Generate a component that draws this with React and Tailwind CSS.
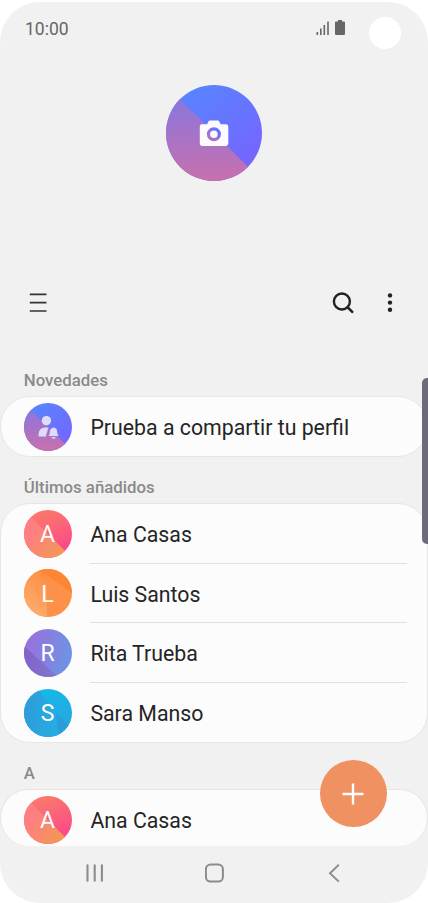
import React from "react";

const contacts = [
  { name: "Ana Casas", letter: "A" },
  { name: "Luis Santos", letter: "L" },
  { name: "Rita Trueba", letter: "R" },
  { name: "Sara Manso", letter: "S" },
];

// shared gradients for all the round avatars
function Gradients() {
  return (
    <svg className="absolute w-0 h-0" aria-hidden="true">
      <defs>
        <clipPath id="round">
          <circle cx="24" cy="24" r="24" />
        </clipPath>
        <linearGradient id="profileTop" x1="0.1" y1="0" x2="0.9" y2="1">
          <stop offset="0" stopColor="#5488ff" />
          <stop offset="1" stopColor="#7a60ff" />
        </linearGradient>
        <linearGradient id="profileBottom" x1="0" y1="0" x2="0" y2="1">
          <stop offset="0" stopColor="#8077e6" />
          <stop offset="1" stopColor="#c870ac" />
        </linearGradient>
        <linearGradient id="redTop" x1="0.4" y1="0" x2="0.8" y2="1">
          <stop offset="0" stopColor="#fc776b" />
          <stop offset="0.3" stopColor="#fb6a74" />
          <stop offset="0.8" stopColor="#fc4b88" />
        </linearGradient>
        <linearGradient id="redBottom" x1="0" y1="0.4" x2="0.8" y2="1">
          <stop offset="0.2" stopColor="#fd7f80" />
          <stop offset="1" stopColor="#f29a50" />
        </linearGradient>
        <linearGradient id="orangeLeft" x1="0.6" y1="0" x2="0.2" y2="1">
          <stop offset="0" stopColor="#fd8e45" />
          <stop offset="1" stopColor="#ffb070" />
        </linearGradient>
        <linearGradient id="violetTop" x1="0" y1="0" x2="1" y2="0.2">
          <stop offset="0.1" stopColor="#9a70dc" />
          <stop offset="1" stopColor="#6e92e4" />
        </linearGradient>
        <linearGradient id="violetBottom" x1="0" y1="0" x2="1" y2="0">
          <stop offset="0" stopColor="#8262c6" />
          <stop offset="1" stopColor="#7f78d2" />
        </linearGradient>
        <linearGradient id="blueRight" x1="0.3" y1="0" x2="0.8" y2="1">
          <stop offset="0" stopColor="#16b9ea" />
          <stop offset="1" stopColor="#28a5dd" />
        </linearGradient>
        <linearGradient id="blueLeft" x1="0" y1="0.5" x2="1" y2="0.5">
          <stop offset="0" stopColor="#309bd8" />
          <stop offset="1" stopColor="#22afe3" />
        </linearGradient>
      </defs>
    </svg>
  );
}

const shapes = {
  profile: (
    <>
      <rect width="48" height="48" fill="url(#profileTop)" />
      <path d="M0 0L48 48H0Z" fill="url(#profileBottom)" />
    </>
  ),
  A: (
    <>
      <rect width="48" height="48" fill="url(#redTop)" />
      <path d="M0 0L48 48H0Z" fill="url(#redBottom)" />
    </>
  ),
  L: (
    <>
      <rect width="48" height="48" fill="#fd9149" />
      <path d="M0 0H23V48H0Z" fill="url(#orangeLeft)" />
      <path d="M14 0H48V24Z" fill="#fe8534" />
    </>
  ),
  R: (
    <>
      <rect width="48" height="48" fill="url(#violetTop)" />
      <path d="M0 17L34 48H0Z" fill="url(#violetBottom)" />
    </>
  ),
  S: (
    <>
      <rect width="48" height="48" fill="url(#blueRight)" />
      <path d="M13 0L34 24V48H0V0Z" fill="url(#blueLeft)" />
      <path d="M32 24L46 38L34 48Z" fill="#2d99d9" opacity="0.7" />
    </>
  ),
};

function Avatar({ kind, children }) {
  return (
    <div className="grid w-12 h-12 shrink-0 place-items-center">
      <svg viewBox="0 0 48 48" className="col-start-1 row-start-1 w-12 h-12">
        <g clipPath="url(#round)">{shapes[kind]}</g>
      </svg>
      <div className="col-start-1 row-start-1 text-[23px] leading-none text-white pt-0.5">
        {children}
      </div>
    </div>
  );
}

function ContactRow({ contact, last }) {
  return (
    <li className="flex h-[59.7px] pl-[22.5px] pr-[20.5px]">
      <div className="pt-[5.6px]">
        <Avatar kind={contact.letter}>{contact.letter}</Avatar>
      </div>
      <div
        className={`ml-[18.9px] flex-1 pt-4 text-[21.3px] leading-[30px] ${
          last ? "" : "border-b border-[#e0e0e0]"
        }`}
      >
        {contact.name}
      </div>
    </li>
  );
}

function SectionTitle({ children }) {
  return (
    <h2 className="pl-[23.8px] pt-[18.4px] text-[16.8px] leading-6 font-medium text-[#8a8a8a]">
      {children}
    </h2>
  );
}

function App() {
  return (
    <div className="h-[903px] w-[428px] overflow-hidden bg-white pt-0.5 font-['Roboto',sans-serif] text-[#252525]">
      <Gradients />
      <div className="relative flex h-[901px] flex-col overflow-hidden rounded-[40px] bg-[#f1f1f1]">
        {/* status bar */}
        <header className="flex h-[83px] shrink-0 items-start pl-[25px] pr-[27.3px] text-[#666]">
          <span className="mt-[15px] text-[17.5px] leading-6">10:00</span>
          <svg viewBox="0 0 14 14" className="ml-auto mt-[19px] h-3.5 w-3.5" fill="currentColor">
            <rect x="0.5" y="11" width="1.6" height="3" />
            <rect x="4" y="7.5" width="1.6" height="6.5" />
            <rect x="7.5" y="4" width="1.6" height="10" />
            <rect x="11.2" y="0.6" width="1.6" height="13.4" />
          </svg>
          <svg viewBox="0 0 10 15" className="ml-[5px] mt-[18px] h-[15px] w-2.5" fill="currentColor">
            <path d="M3 0H7V1.5H9Q10 1.5 10 2.5V14Q10 15 9 15H1Q0 15 0 14V2.5Q0 1.5 1 1.5H3Z" />
          </svg>
          <span className="ml-6 mt-[15px] h-8 w-8 rounded-full bg-white" />
        </header>

        <div className="grid h-24 w-24 shrink-0 place-items-center self-center">
          <svg viewBox="0 0 48 48" className="col-start-1 row-start-1 h-24 w-24">
            <g clipPath="url(#round)">{shapes.profile}</g>
          </svg>
          <svg viewBox="0 0 30 26" className="col-start-1 row-start-1 h-[26px] w-[30px]">
            <path
              fill="#fcfcff"
              fillRule="evenodd"
              d="M10.8 0.4H18.8Q19.6 0.4 20 1.1L21.6 4.2H26.9Q29.3 4.2 29.3 6.6V23.6Q29.3 26 26.9 26H3.1Q0.8 26 0.8 23.6V6.6Q0.8 4.2 3.1 4.2H8.1L9.7 1.1Q10.1 0.4 10.8 0.4ZM14.9 7.3A7 7 0 1 0 14.9 21.3A7 7 0 1 0 14.9 7.3ZM14.9 10.5A3.8 3.8 0 1 1 14.9 18.1A3.8 3.8 0 1 1 14.9 10.5Z"
            />
          </svg>
        </div>

        {/* toolbar */}
        <div className="mt-[97.6px] flex h-12 shrink-0 items-center pl-[29px] pr-[35px]">
          <svg viewBox="0 0 18 20" className="h-5 w-[18px]" stroke="#333" strokeWidth="1.7">
            <path d="M0.8 1.3H17.5M0.8 9.7H17.5M0.8 18H17.5" />
          </svg>
          <svg
            viewBox="0 0 22 22"
            className="ml-auto h-[22px] w-[22px]"
            fill="none"
            stroke="#222"
            strokeWidth="2.4"
            strokeLinecap="round"
          >
            <circle cx="9.9" cy="9.5" r="8" />
            <path d="M15.7 15.3L20.2 19.8" strokeWidth="2.6" />
          </svg>
          <svg viewBox="0 0 6 20" className="ml-[32.7px] h-5 w-1.5" fill="#222">
            <circle cx="3" cy="2.4" r="2.2" />
            <circle cx="3" cy="9.6" r="2.2" />
            <circle cx="3" cy="16.8" r="2.2" />
          </svg>
        </div>

        <div className="mt-[23.4px]">
          <SectionTitle>Novedades</SectionTitle>
          <div className="mt-[3.6px] flex h-[61px] rounded-[30px] border border-[#e6e6e6] bg-[#fcfcfc] pl-[22.5px]">
            <div className="pt-[5.6px]">
              <Avatar kind="profile">
                <svg viewBox="0 0 22 24" className="h-6 w-[22px]" fill="#e0dbf7">
                  <circle cx="9.4" cy="4.6" r="4.7" />
                  <path d="M1.6 20.5V18Q2 11.8 8.2 11.6H11.6Q10.4 13.4 10.3 15.5L9.1 18.8V20.5Z" />
                  <path d="M16.6 11.6Q20.2 12.3 20.2 16.2Q20.2 18.4 21.6 19.9H11.7Q12.9 18.4 12.9 16.2Q12.9 12.3 16.6 11.6Z" />
                  <path d="M14.2 20.9H19Q18.4 22.9 16.6 22.9Q14.8 22.9 14.2 20.9Z" opacity="0.8" />
                </svg>
              </Avatar>
            </div>
            <span className="ml-[18.9px] pt-4 text-[21.3px] leading-[30px]">
              Prueba a compartir tu perfil
            </span>
          </div>

          <SectionTitle>Últimos añadidos</SectionTitle>
          <ul className="mt-[3.6px] h-[240px] rounded-[30px] border border-[#e6e6e6] bg-[#fcfcfc]">
            {contacts.map((c, i) => (
              <ContactRow key={c.name} contact={c} last={i === contacts.length - 1} />
            ))}
          </ul>

          <SectionTitle>A</SectionTitle>
          <ul className="mt-[3.6px] h-[57px] overflow-hidden rounded-[30px] border border-b-0 border-[#e6e6e6] bg-[#fcfcfc]">
            <ContactRow contact={contacts[0]} last />
          </ul>
        </div>

        {/* system navigation */}
        <nav className="flex h-[55px] shrink-0 items-center justify-between pl-[85px] pr-[83px] text-[#8b8b8b]">
          <svg viewBox="0 0 20 20" className="h-5 w-5" stroke="currentColor" strokeWidth="2.1" strokeLinecap="round">
            <path d="M2.5 2.3V17.8M9.7 2.3V17.8M16.9 2.3V17.8" />
          </svg>
          <svg viewBox="0 0 20 20" className="h-5 w-5" fill="none" stroke="currentColor" strokeWidth="2">
            <rect x="0.9" y="1.6" width="17" height="17" rx="4.6" />
          </svg>
          <svg viewBox="0 0 20 20" className="h-5 w-5" fill="none" stroke="currentColor" strokeWidth="1.9">
            <path d="M13.8 1.8L5 10.2L13.8 18.6" />
          </svg>
        </nav>

        {/* scroll handle */}
        <div className="absolute -right-1 top-[376px] h-[166px] w-[10px] rounded-[5px] bg-[#6c6b79]" />

        <button className="absolute left-[319.6px] top-[758px] flex h-[67px] w-[67px] items-center justify-center rounded-full bg-[#ef9161]">
          <svg viewBox="0 0 22 22" className="h-[22px] w-[22px]" stroke="#fff" strokeWidth="2.4">
            <path d="M11 0.5V21.5M0.5 11H21.5" />
          </svg>
        </button>
      </div>
    </div>
  );
}

export default App;
